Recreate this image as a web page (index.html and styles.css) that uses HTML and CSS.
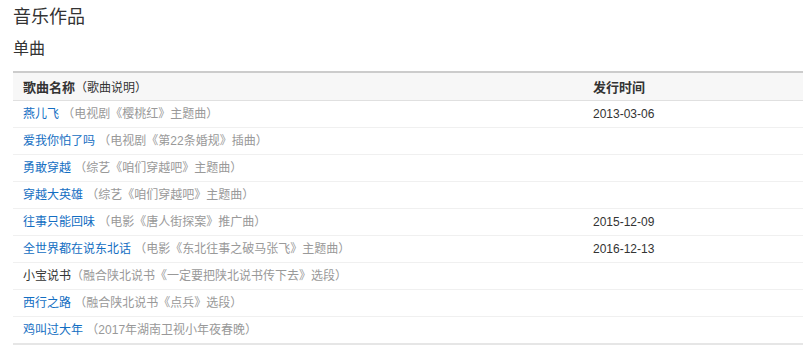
FILE: index.html
```html
<!DOCTYPE html>
<html lang="zh-CN">
<head>
<meta charset="utf-8">
<title>音乐作品</title>
<link rel="stylesheet" href="styles.css">
</head>
<body>
<div class="page">
  <h2 class="title">音乐作品</h2>
  <h3 class="subtitle">单曲</h3>
  <table class="works">
    <thead>
      <tr>
        <th class="col-name"><b>歌曲名称</b><span class="hint">（歌曲说明）</span></th>
        <th class="col-date"><b>发行时间</b></th>
      </tr>
    </thead>
    <tbody>
      <tr><td><a class="link">燕儿飞</a> <span class="desc">（电视剧《樱桃红》主题曲）</span></td><td>2013-03-06</td></tr>
      <tr><td><a class="link">爱我你怕了吗</a> <span class="desc">（电视剧《第22条婚规》插曲）</span></td><td></td></tr>
      <tr><td><a class="link">勇敢穿越</a> <span class="desc">（综艺《咱们穿越吧》主题曲）</span></td><td></td></tr>
      <tr><td><a class="link">穿越大英雄</a> <span class="desc">（综艺《咱们穿越吧》主题曲）</span></td><td></td></tr>
      <tr><td><a class="link">往事只能回味</a> <span class="desc">（电影《唐人街探案》推广曲）</span></td><td>2015-12-09</td></tr>
      <tr><td><a class="link">全世界都在说东北话</a> <span class="desc">（电影《东北往事之破马张飞》主题曲）</span></td><td>2016-12-13</td></tr>
      <tr><td><span class="plain">小宝说书</span><span class="desc">（融合陕北说书《一定要把陕北说书传下去》选段）</span></td><td></td></tr>
      <tr><td><a class="link">西行之路</a> <span class="desc">（融合陕北说书《点兵》选段）</span></td><td></td></tr>
      <tr><td><a class="link">鸡叫过大年</a> <span class="desc">（2017年湖南卫视小年夜春晚）</span></td><td></td></tr>
    </tbody>
  </table>
</div>
</body>
</html>
```
FILE: styles.css
```css
html, body {
  margin: 0;
  padding: 0;
  background: #fff;
}
body {
  font-family: "Liberation Sans", Arial, "Noto Sans CJK SC", sans-serif;
  color: #333;
  font-size: 12px;
}
.page {
  padding: 5px 9px 0 13px;
}
.title {
  margin: 0;
  font-size: 18px;
  line-height: 24px;
  font-weight: normal;
  color: #333;
}
.subtitle {
  margin: 9px 0 0;
  font-size: 16px;
  line-height: 22px;
  font-weight: normal;
  color: #333;
}
.works {
  margin-top: 11px;
  width: 100%;
  border-collapse: collapse;
  border-top: 2px solid #ccc;
  border-bottom: 2px solid #e6e6e6;
}
.works th {
  background: #f7f7f7;
  height: 27px;
  padding: 0 10px;
  text-align: left;
  font-weight: normal;
  font-size: 12px;
  border-bottom: 1px solid #e0e0e0;
  white-space: nowrap;
}
.works th b {
  font-size: 13px;
  font-weight: bold;
  color: #333;
}
.works th .hint {
  font-size: 12px;
  color: #333;
}
.col-name {
  width: 550px;
}
.works td {
  height: 26px;
  padding: 0 10px;
  border-bottom: 1px solid #f0f0f0;
  line-height: 16px;
  white-space: nowrap;
  color: #333;
}
.works tbody tr:last-child td {
  border-bottom: none;
}
.link {
  color: #136ec2;
  text-decoration: none;
}
.plain {
  color: #333;
}
.desc {
  color: #999;
}
```
